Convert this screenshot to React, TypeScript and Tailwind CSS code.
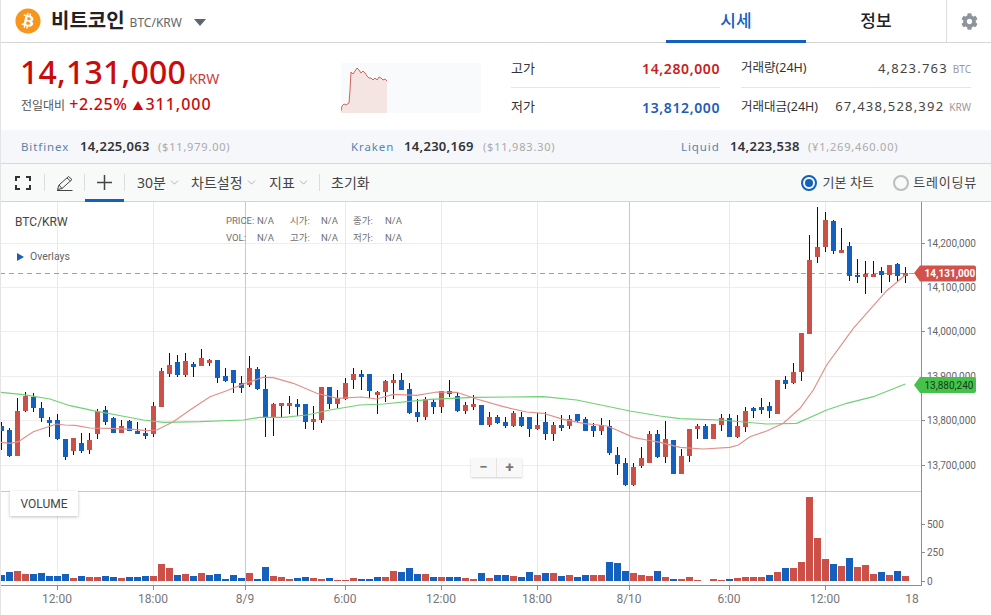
import { ChevronDown } from "lucide-react";
import { FaBitcoin, FaCog } from "react-icons/fa";

// [colour, wickTop, bodyTop, bodyBottom, wickBottom], measured at 3x from y=200
type Candle = [string, number, number, number, number];

const CANDLES: Candle[] = [
  ["b", 665, 678, 692, 748], ["b", 685, 690, 768, 772], ["r", 595, 633, 768, 768], ["r", 575, 587, 632, 635],
  ["b", 580, 590, 624, 637], ["b", 607, 624, 654, 668], ["b", 650, 660, 668, 710], ["b", 643, 660, 716, 720],
  ["b", 716, 716, 770, 778], ["r", 714, 714, 753, 766], ["b", 698, 729, 753, 758], ["r", 700, 720, 750, 764],
  ["r", 628, 632, 702, 718], ["b", 618, 630, 665, 676], ["b", 650, 654, 698, 698], ["r", 660, 678, 698, 698],
  ["b", 660, 663, 692, 692], ["b", 665, 694, 701, 701], ["b", 684, 699, 708, 716], ["r", 607, 618, 702, 712],
  ["r", 505, 514, 621, 622], ["r", 460, 495, 522, 532], ["b", 466, 486, 525, 532], ["r", 460, 483, 525, 532],
  ["b", 487, 492, 500, 532], ["r", 448, 474, 498, 498], ["r", 476, 480, 488, 498], ["b", 480, 480, 533, 550],
  ["b", 505, 528, 543, 548], ["b", 510, 510, 548, 578], ["b", 528, 550, 563, 578], ["r", 468, 504, 554, 562],
  ["b", 500, 507, 567, 568], ["b", 526, 567, 652, 712], ["r", 608, 612, 652, 707], ["r", 608, 610, 617, 652],
  ["r", 587, 609, 617, 642], ["b", 597, 612, 620, 648], ["b", 612, 612, 665, 686], ["r", 618, 657, 665, 691],
  ["r", 560, 561, 660, 668], ["b", 560, 560, 612, 625], ["r", 570, 595, 612, 625], ["r", 533, 548, 597, 598],
  ["r", 505, 522, 540, 568], ["b", 510, 522, 530, 570], ["b", 522, 522, 572, 595], ["r", 574, 576, 584, 642],
  ["r", 540, 543, 575, 605], ["r", 522, 540, 549, 598], ["b", 520, 540, 569, 569], ["b", 548, 568, 638, 642],
  ["b", 598, 636, 651, 667], ["r", 592, 597, 651, 660], ["b", 598, 605, 621, 642], ["r", 573, 573, 621, 640],
  ["b", 541, 573, 581, 592], ["b", 575, 589, 632, 634], ["r", 607, 615, 632, 642], ["r", 584, 612, 621, 628],
  ["b", 615, 615, 674, 674], ["r", 635, 651, 674, 680], ["b", 645, 651, 668, 672], ["b", 650, 666, 678, 684],
  ["r", 633, 640, 678, 680], ["b", 635, 651, 678, 680], ["b", 651, 651, 686, 712], ["r", 640, 675, 687, 690],
  ["b", 635, 666, 702, 720], ["r", 665, 675, 701, 721], ["b", 645, 675, 683, 694], ["r", 645, 658, 678, 688],
  ["b", 642, 642, 664, 668], ["b", 650, 657, 692, 692], ["b", 668, 678, 692, 710], ["r", 655, 675, 692, 706],
  ["b", 660, 678, 760, 766], ["b", 740, 765, 792, 824], ["b", 775, 790, 855, 858], ["r", 790, 801, 855, 858],
  ["r", 740, 774, 798, 804], ["r", 693, 702, 788, 788], ["b", 690, 702, 770, 775], ["r", 662, 717, 770, 787],
  ["b", 720, 720, 821, 821], ["r", 748, 768, 821, 821], ["r", 687, 687, 768, 787], ["r", 672, 678, 686, 718],
  ["b", 672, 678, 716, 716], ["r", 672, 672, 716, 716], ["r", 643, 655, 674, 695], ["b", 643, 655, 710, 711],
  ["r", 646, 678, 711, 715], ["r", 622, 633, 681, 696], ["b", 620, 624, 632, 652], ["b", 595, 622, 630, 642],
  ["b", 607, 618, 633, 655], ["r", 540, 540, 641, 642], ["b", 527, 540, 552, 565], ["r", 488, 517, 549, 550],
  ["r", 400, 400, 516, 545], ["r", 105, 180, 402, 402], ["r", 22, 141, 171, 190], ["r", 35, 60, 141, 155],
  ["b", 60, 62, 152, 163], ["r", 85, 150, 158, 158], ["b", 127, 138, 227, 245], ["b", 178, 225, 227, 250],
  ["r", 182, 221, 231, 281], ["r", 184, 221, 231, 231], ["b", 200, 213, 225, 278], ["r", 195, 195, 225, 245],
  ["b", 190, 191, 227, 246], ["r", 200, 219, 228, 248],
];

// bar tops at 3x from y=490
const VOLUMES: [string, number][] = [
  ["b", 255], ["b", 246], ["r", 243], ["r", 252], ["b", 252], ["b", 249], ["b", 258], ["b", 258], ["b", 252], ["r", 264],
  ["b", 258], ["r", 261], ["r", 261], ["b", 258], ["b", 261], ["r", 264], ["b", 261], ["b", 261], ["b", 258], ["r", 258],
  ["r", 222], ["r", 234], ["b", 255], ["r", 252], ["b", 258], ["r", 249], ["b", 255], ["b", 252], ["b", 267], ["b", 255],
  ["b", 264], ["r", 249], ["b", 267], ["b", 231], ["r", 258], ["r", 261], ["r", 267], ["b", 264], ["b", 261], ["r", 264],
  ["r", 267], ["b", 264], ["r", 270], ["r", 270], ["r", 264], ["b", 267], ["b", 267], ["b", 261], ["r", 261], ["r", 243],
  ["b", 246], ["b", 234], ["b", 252], ["r", 252], ["b", 261], ["r", 261], ["b", 261], ["b", 261], ["r", 264], ["r", 267],
  ["b", 249], ["r", 264], ["b", 255], ["b", 255], ["r", 258], ["b", 261], ["b", 246], ["r", 255], ["b", 249], ["r", 249],
  ["b", 258], ["r", 255], ["b", 261], ["b", 255], ["r", 255], ["r", 255], ["b", 216], ["b", 219], ["b", 243], ["r", 249],
  ["r", 255], ["r", 258], ["b", 243], ["r", 261], ["b", 267], ["r", 267], ["r", 261], ["r", 270], ["b", 273], ["r", 267],
  ["r", 270], ["b", 267], ["r", 264], ["r", 261], ["r", 261], ["r", 261], ["b", 255], ["r", 246], ["b", 234], ["r", 234],
  ["r", 216], ["r", 20], ["r", 144], ["r", 207], ["b", 222], ["r", 228], ["b", 204], ["r", 231], ["r", 225], ["r", 252],
  ["b", 246], ["r", 255], ["b", 243], ["r", 258],
];

const RED_LINE = [
  [0, 727], [30, 730], [55, 725], [100, 695], [145, 680], [170, 672], [195, 675], [225, 676], [270, 684], [330, 685],
  [400, 688], [440, 692], [470, 690], [520, 665], [570, 630], [630, 590], [680, 572], [730, 552], [790, 532], [820, 533],
  [880, 550], [950, 580], [1012, 595], [1085, 591], [1130, 597], [1180, 583], [1250, 586], [1310, 576], [1370, 577],
  [1430, 597], [1510, 620], [1580, 636], [1630, 640], [1690, 658], [1750, 670], [1820, 678], [1850, 690], [1900, 712],
  [1940, 720], [1980, 727], [2040, 742], [2110, 747], [2190, 742], [2215, 735], [2250, 710], [2300, 693], [2350, 670],
  [2400, 625], [2440, 570], [2480, 495], [2560, 385], [2660, 272], [2716, 225],
];

const GREEN_LINE = [
  [0, 577], [70, 584], [150, 597], [210, 617], [280, 632], [350, 645], [430, 660], [490, 667], [600, 665], [730, 660],
  [780, 652], [850, 652], [920, 645], [990, 630], [1080, 615], [1150, 612], [1290, 598], [1420, 592], [1630, 590],
  [1730, 600], [1890, 633], [1980, 648], [2040, 656], [2160, 660], [2300, 672], [2390, 670], [2480, 630], [2540, 610],
  [2620, 590], [2716, 552],
];

const GRID_Y = [243, 287, 331, 376, 420, 465];
const GRID_X: [number, boolean][] = [
  [57, false], [153, false], [245, true], [345, false], [441, false], [537, false], [629, true], [729, false], [825, false],
];
const PRICE_LABELS = ["14,200,000", "14,100,000", "14,000,000", "13,900,000", "13,800,000", "13,700,000"];
const TIME_LABELS: [number, string][] = [
  [57, "12:00"], [153, "18:00"], [245, "8/9"], [345, "6:00"], [441, "12:00"], [537, "18:00"], [629, "8/10"], [729, "6:00"], [825, "12:00"], [912, "18"],
];
const DASHES = Array.from({ length: 102 }, (_, i) => i * 9);

const SPARK = "341,111 342,106 344,104 346,105 349,103 350,90 351,72 353,74 355,71 357,68 359,70 361,73 363,71 365,73 367,76 369,78 371,78 373,80 375,78 377,80 379,77 381,78 383,80 385,79 387,81";

const EXCHANGES = [
  { name: "Bitfinex", price: "14,225,063", quote: "($11,979.00)", nameW: "w-[59px]", priceW: "w-[78px]" },
  { name: "Kraken", price: "14,230,169", quote: "($11,983.30)", nameW: "w-[53px]", priceW: "w-[79px]" },
  { name: "Liquid", price: "14,223,538", quote: "(¥1,269,460.00)", nameW: "w-[49px]", priceW: "w-[78px]" },
];

const scale = (pts: number[][]) => pts.map(([x, y]) => `${(x / 3).toFixed(1)},${(200 + y / 3).toFixed(1)}`).join(" ");

function Divider() {
  return <span className="h-[17px] w-px bg-[#dcdcdc]" />;
}

function Menu({ label, width }: { label: string; width: string }) {
  return (
    <div className={`flex items-center gap-[2px] ${width}`}>
      <span className="whitespace-nowrap text-[14px] text-[#444]">{label}</span>
      <ChevronDown size={13} strokeWidth={1} className="text-[#777]" />
    </div>
  );
}

function Chart() {
  return (
    <svg width={991} height={413} viewBox="0 202 991 413" className="block [font-family:Roboto,sans-serif]">
      {/* grid */}
      <g shapeRendering="crispEdges">
        {GRID_Y.map((y) => (
          <rect key={y} x={0} y={y} width={921} height={1} fill="#ededed" />
        ))}
        {GRID_X.map(([x, major]) => (
          <rect key={x} x={x} y={202} width={1} height={383} fill={major ? "#c9c9c9" : "#e9e9e9"} />
        ))}
        <rect x={0} y={491} width={921} height={1} fill="#c9c9c9" />
        <rect x={921} y={202} width={1} height={383} fill="#8e8e8e" />
        <rect x={0} y={585} width={922} height={1} fill="#8e8e8e" />
        {GRID_X.map(([x]) => (
          <rect key={x} x={x} y={586} width={1} height={4} fill="#8e8e8e" />
        ))}
        <rect x={921} y={243} width={4} height={1} fill="#8e8e8e" />
        <rect x={921} y={331} width={4} height={1} fill="#8e8e8e" />
        <rect x={921} y={420} width={4} height={1} fill="#8e8e8e" />
        <rect x={921} y={465} width={4} height={1} fill="#8e8e8e" />
        <rect x={921} y={524} width={4} height={1} fill="#8e8e8e" />
        <rect x={921} y={552} width={4} height={1} fill="#8e8e8e" />
        <rect x={921} y={581} width={4} height={1} fill="#8e8e8e" />
      </g>

      {/* last price line */}
      <g shapeRendering="crispEdges">
        {DASHES.map((x) => (
          <rect key={x} x={x} y={273} width={5} height={1} fill="#e9827c" />
        ))}
      </g>

      {/* candles */}
      <g shapeRendering="crispEdges">
        {CANDLES.map(([c, wt, bt, bb, wb], i) => {
          const x = 8 * i;
          const top = Math.round(200 + bt / 3);
          const bottom = Math.round(200 + bb / 3);
          return (
            <g key={i}>
              <rect x={x + 1} y={Math.round(200 + wt / 3)} width={1} height={Math.round((wb - wt) / 3)} fill="#111" />
              <rect x={x - 1} y={top} width={5} height={Math.max(bottom - top, 2)} fill={c === "r" ? "#cc4f48" : "#1360bf"} />
            </g>
          );
        })}
      </g>

      <polyline points={scale(GREEN_LINE)} fill="none" stroke="#72cf76" strokeWidth={1.2} />
      <polyline points={scale(RED_LINE)} fill="none" stroke="#e0908a" strokeWidth={1.2} />

      {/* volume */}
      <g shapeRendering="crispEdges">
        {VOLUMES.map(([c, t], i) => {
          const top = Math.round(490 + t / 3);
          return <rect key={i} x={8 * i - 2} y={top} width={7} height={581 - top} fill={c === "r" ? "#cc4f48" : "#1360bf"} />;
        })}
      </g>

      {/* axes */}
      <g fontSize={10} fill="#666">
        {PRICE_LABELS.map((label, i) => (
          <text key={label} x={927} y={GRID_Y[i] + 3.5}>
            {label}
          </text>
        ))}
        <text x={927} y={527.5}>500</text>
        <text x={927} y={556}>250</text>
        <text x={927} y={584.5}>0</text>
      </g>
      <g fontSize={12} fill="#777" textAnchor="middle">
        {TIME_LABELS.map(([x, label], i) => (
          <text key={i} x={x} y={603}>
            {label}
          </text>
        ))}
      </g>

      {/* price tags */}
      <path d="M914 273 L920 265.5 H974 a2 2 0 0 1 2 2 V279.5 a2 2 0 0 1 -2 2 H920 Z" fill="#d2524b" />
      <text x={924.5} y={277} fontSize={10} fontWeight={700} fill="#fff">14,131,000</text>
      <path d="M914 385 L920 377 H974 a2 2 0 0 1 2 2 V391 a2 2 0 0 1 -2 2 H920 Z" fill="#46c24c" />
      <text x={924.5} y={388.5} fontSize={10} fill="#123d15">13,880,240</text>
    </svg>
  );
}

function Legend() {
  const rows = [
    ["PRICE:", "시가:", "종가:"],
    ["VOL:", "고가:", "저가:"],
  ];
  return (
    <div className="absolute left-[226px] top-[13px] flex flex-col gap-[5px] text-[9.5px] leading-[12px] text-[#707070]">
      {rows.map((row) => (
        <div key={row[0]} className="flex">
          <span className="w-[31px]">{row[0]}</span>
          <span className="w-[33px]">N/A</span>
          <span className="w-[31px]">{row[1]}</span>
          <span className="w-[32px]">N/A</span>
          <span className="w-[32px]">{row[2]}</span>
          <span>N/A</span>
        </div>
      ))}
    </div>
  );
}

export default function App() {
  return (
    <div className="h-[615px] w-[991px] overflow-hidden border-l border-[#e4e4e4] bg-white [font-family:'Noto_Sans','Noto_Sans_CJK_KR',sans-serif]">
      {/* header */}
      <header className="flex h-[43px] items-stretch border-b border-[#d6d6d6]">
        <div className="flex flex-1 items-center pl-[14px]">
          <FaBitcoin size={26} className="text-[#f7951d]" />
          <span className="ml-[10px] text-[20px] font-bold text-[#222]">비트코인</span>
          <span className="ml-[5px] mt-[3px] text-[12px] text-[#666]">BTC/KRW</span>
          <span className="ml-[12px] mt-[3px] h-0 w-0 border-x-[6.5px] border-t-[7px] border-x-transparent border-t-[#5b6670]" />
        </div>
        <div className="relative flex w-[140px] items-center justify-center text-[17px] font-medium text-[#1360bf]">
          시세
          <span className="absolute inset-x-0 -bottom-px h-[3px] bg-[#1360bf]" />
        </div>
        <div className="flex w-[140px] items-center justify-center text-[17px] font-medium text-[#222]">정보</div>
        <div className="flex w-[45px] items-center justify-center border-l border-[#dedede]">
          <FaCog size={17} className="text-[#8d949b]" />
        </div>
      </header>

      {/* price summary */}
      <section className="flex h-[87px]">
        <div className="w-[340px] pl-[19px] pt-[7px]">
          <div className="flex items-baseline">
            <span className="text-[32px] font-medium leading-[44px] tracking-[0.2px] text-[#cc0a0a]">14,131,000</span>
            <span className="ml-[3px] text-[14px] text-[#cc3a3a]">KRW</span>
          </div>
          <div className="-mt-[2px] flex items-baseline pl-px text-[#cc0a0a]">
            <span className="text-[12px] text-[#555]">전일대비</span>
            <span className="ml-[4px] text-[16px] font-medium tracking-[0.6px]">+2.25%</span>
            <span className="ml-[5px] text-[11px]">▲</span>
            <span className="ml-[2px] text-[16px] font-medium tracking-[1px]">311,000</span>
          </div>
        </div>
        <div className="mt-[20px] h-[50px] w-[140px] bg-[#f9fafb]">
          <svg width={140} height={50} viewBox="341 63 140 50">
            <polygon points={`${SPARK} 387,113 341,113`} fill="#f4e4e2" />
            <polyline points={SPARK} fill="none" stroke="#d0655f" strokeWidth={1} />
          </svg>
        </div>
        <div className="ml-[30px] flex w-[209px] flex-col pt-[7px]">
          <div className="flex h-[38px] items-center justify-between border-b border-[#e6e6e6]">
            <span className="text-[13px] text-[#333]">고가</span>
            <span className="text-[14px] font-semibold tracking-[0.6px] text-[#c92020]">14,280,000</span>
          </div>
          <div className="flex h-[38px] items-center justify-between">
            <span className="text-[13px] text-[#333]">저가</span>
            <span className="text-[14px] font-semibold tracking-[0.6px] text-[#1d5db5]">13,812,000</span>
          </div>
        </div>
        <div className="ml-[21px] flex w-[230px] flex-col pt-[7px]">
          <div className="flex h-[38px] items-center justify-between border-b border-[#e6e6e6]">
            <span className="text-[12.5px] text-[#333]">거래량(24H)</span>
            <span className="text-[13px] tracking-[1.2px] text-[#444]">
              4,823.763<span className="ml-[5px] text-[10px] tracking-normal text-[#999]">BTC</span>
            </span>
          </div>
          <div className="flex h-[38px] items-center justify-between">
            <span className="text-[12.5px] text-[#333]">거래대금(24H)</span>
            <span className="text-[13px] tracking-[1.2px] text-[#444]">
              67,438,528,392<span className="ml-[5px] text-[10px] tracking-normal text-[#999]">KRW</span>
            </span>
          </div>
        </div>
      </section>

      {/* other exchanges */}
      <section className="grid h-[34px] grid-cols-[330px_330px_1fr] items-center border-b border-[#d9d9d9] bg-[#f5f7fa] pl-[20px]">
        {EXCHANGES.map((ex) => (
          <div key={ex.name} className="flex items-baseline whitespace-nowrap">
            <span className={`${ex.nameW} text-[11.5px] tracking-[0.9px] text-[#5b84ad]`}>{ex.name}</span>
            <span className={`${ex.priceW} text-[13px] font-semibold tracking-[0.3px] text-[#333]`}>{ex.price}</span>
            <span className="text-[11px] tracking-[0.8px] text-[#aaa]">{ex.quote}</span>
          </div>
        ))}
      </section>

      {/* toolbar */}
      <nav className="flex h-[38px] items-center border-b border-[#d4d4d4] bg-[#f8f9f9]">
        <div className="flex w-[43px] justify-center">
          <svg width={16} height={14} viewBox="0 0 16 14" fill="none" stroke="#333" strokeWidth={2}>
            <path d="M1 5V1H5M11 1H15V5M15 9V13H11M5 13H1V9" />
          </svg>
        </div>
        <Divider />
        <div className="flex w-[39px] justify-center">
          <svg width={18} height={16} viewBox="0 0 18 16" fill="none" stroke="#444" strokeWidth={1}>
            <path d="M1.5 14.5L3 10L12.5 1.5L16 4.5L6 13.5L1.5 14.5ZM3 10L6 13.5M11 3L14.5 6M1 15.5H16.5" />
          </svg>
        </div>
        <Divider />
        <div className="relative flex h-full w-[39px] items-center justify-center">
          <svg width={15} height={15} viewBox="0 0 15 15" stroke="#444" strokeWidth={1.5}>
            <path d="M0 7.5H15M7.5 0V15" />
          </svg>
          <span className="absolute inset-x-0 -bottom-px h-[3px] bg-[#1360bf]" />
        </div>
        <Divider />
        <div className="ml-[12px]">
          <Menu label="30분" width="w-[54px]" />
        </div>
        <Menu label="차트설정" width="w-[78px]" />
        <Menu label="지표" width="w-[50px]" />
        <Divider />
        <span className="ml-[11px] text-[14px] text-[#444]">초기화</span>
        <div className="ml-auto flex items-center pr-[14px]">
          <span className="flex h-[16px] w-[16px] items-center justify-center rounded-full border-2 border-[#1360bf]">
            <span className="h-[8px] w-[8px] rounded-full bg-[#1360bf]" />
          </span>
          <span className="ml-[5px] text-[13px] tracking-[0.1px] text-[#444]">기본 차트</span>
          <span className="ml-[19px] h-[16px] w-[16px] rounded-full border-2 border-[#bdbdbd]" />
          <span className="ml-[4px] text-[13px] tracking-[0.8px] text-[#444]">트레이딩뷰</span>
        </div>
      </nav>

      {/* chart */}
      <div className="relative -ml-px [font-family:Roboto,'Noto_Sans_CJK_KR',sans-serif]">
        <Chart />
        <span className="absolute left-[15px] top-[13px] text-[12px] leading-[14px] text-[#444]">BTC/KRW</span>
        <Legend />
        <div className="absolute left-[17px] top-[49px] flex items-center gap-[6px] text-[10.5px] leading-[12px] text-[#666]">
          <span className="h-0 w-0 border-y-[4.5px] border-l-[7px] border-y-transparent border-l-[#1d5db5]" />
          Overlays
        </div>
        <div className="absolute left-[471px] top-[256px] flex h-[19px] w-[51px] bg-[#f8f8f8] text-[15px] font-bold leading-[18px] text-[#777] shadow-[0_1px_2px_rgba(0,0,0,0.2)]">
          <span className="flex-1 border-r border-[#e4e4e4] text-center">−</span>
          <span className="flex-1 text-center">+</span>
        </div>
        <div className="absolute left-[10px] top-[289px] flex h-[25px] w-[68px] items-center justify-center bg-white text-[12px] text-[#444] shadow-[0_1px_3px_rgba(0,0,0,0.25)]">
          VOLUME
        </div>
      </div>
    </div>
  );
}
